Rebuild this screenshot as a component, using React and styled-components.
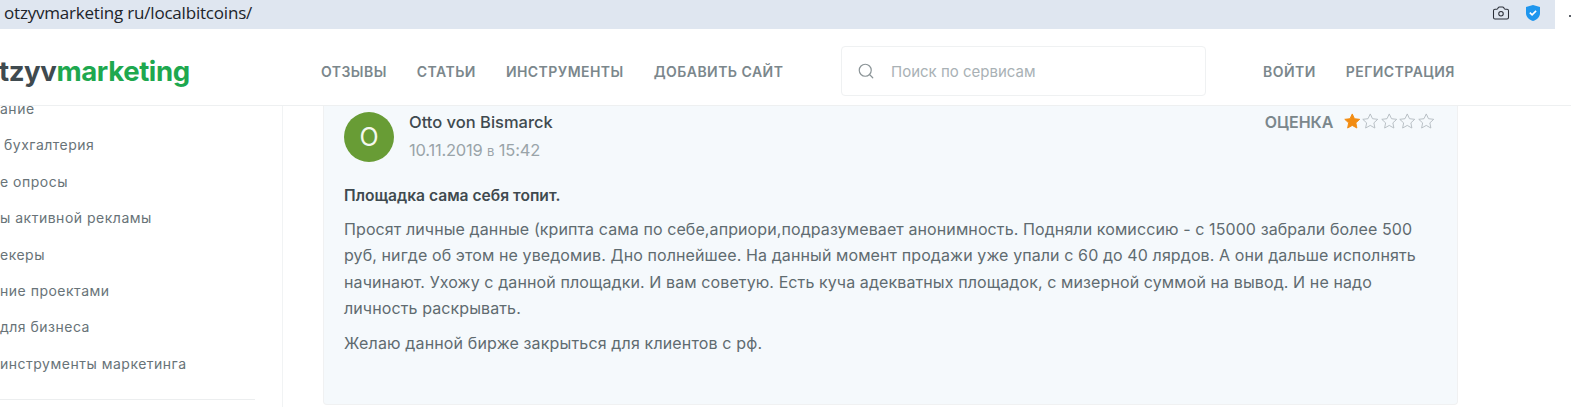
import React from 'react';
import styled, { createGlobalStyle } from 'styled-components';
import { Search, Camera } from 'lucide-react';

const GlobalStyle = createGlobalStyle`
  html, body {
    margin: 0;
    padding: 0;
    background: #fff;
    overflow: hidden;
  }
  body {
    font-family: Inter, "Noto Sans", "Liberation Sans", sans-serif;
  }
`;

const Page = styled.div`
  display: flex;
  flex-flow: column;
  width: 1571px;
  height: 407px;
  overflow: hidden;
`;

const BrowserBar = styled.div`
  display: flex;
  flex: none;
  align-items: center;
  height: 29px;
  background: linear-gradient(to right, #dfe6f0 1555px, #fff 1555px);
`;

const Url = styled.div`
  flex: 1;
  padding-left: 4px;
  padding-bottom: 5px;
  font-family: "Open Sans", sans-serif;
  font-size: 17px;
  letter-spacing: -0.2px;
  color: #20242a;
`;

const BarIcons = styled.div`
  display: flex;
  align-items: center;
  gap: 15px;
  padding-bottom: 4px;
`;

const BarDot = styled.div`
  width: 2px;
  height: 2px;
  margin-left: 13px;
  margin-top: 6px;
  background: #5a6068;
`;

const Header = styled.header`
  display: flex;
  flex: none;
  align-items: center;
  box-sizing: border-box;
  height: 77px;
  padding-top: 8px;
  border-bottom: 1px solid #eef0f1;
`;

const Logo = styled.div`
  flex: none;
  width: 322px;
  margin-left: -1px;
  font-size: 27.6px;
  font-weight: 700;
  letter-spacing: -0.4px;
  color: #3f4a4f;

  span {
    color: #1ea84f;
  }
`;

const Nav = styled.nav`
  display: flex;
  flex: none;
  gap: 30px;
  width: 520px;
`;

const NavLink = styled.a`
  font-size: 14px;
  font-weight: 600;
  letter-spacing: 0.45px;
  text-transform: uppercase;
  white-space: nowrap;
  color: #7b878c;
`;

const SearchBox = styled.div`
  display: flex;
  flex: none;
  align-items: center;
  gap: 16px;
  box-sizing: border-box;
  width: 365px;
  height: 50px;
  margin-right: 57px;
  padding-left: 15px;
  border: 1px solid #eff1f2;
  border-radius: 4px;
  font-size: 15px;
  color: #a9b1b5;
`;

const Body = styled.main`
  display: flex;
  flex: 1;
  min-height: 0;
`;

const Sidebar = styled.aside`
  flex: none;
  box-sizing: border-box;
  width: 283px;
  padding-right: 27px;
  border-right: 1px solid #f1f3f4;
`;

const Category = styled.div`
  display: flex;
  flex-flow: column;
  gap: 18px;
  margin-top: -6px;
  padding-bottom: 26px;
  border-bottom: 1px solid #eceeef;
`;

const CategoryItem = styled.a`
  margin-left: ${p => p.$shift}px;
  font-size: 14px;
  line-height: 18.4px;
  letter-spacing: 0.5px;
  white-space: nowrap;
  color: #687378;
`;

const Content = styled.div`
  flex: none;
  width: 1135px;
  margin-left: 40px;
`;

const ReviewCard = styled.article`
  box-sizing: border-box;
  height: 299px;
  padding: 6px 22px 0 20px;
  border: 1px solid #f0f1f2;
  border-top: 0;
  border-radius: 0 0 4px 4px;
  background: #f5f9fc;
`;

const ReviewHead = styled.div`
  display: flex;
  align-items: flex-start;
`;

const Avatar = styled.div`
  display: flex;
  flex: none;
  align-items: center;
  justify-content: center;
  width: 50px;
  height: 50px;
  margin-right: 15px;
  border-radius: 50%;
  background: #689c35;
  font-size: 25px;
  color: #f4f8ee;
`;

const Author = styled.div`
  flex: 1;
`;

const AuthorName = styled.div`
  font-size: 16.5px;
  font-weight: 500;
  line-height: 20px;
  color: #3f4a4f;
`;

const ReviewDate = styled.div`
  margin-top: 8px;
  font-size: 16.5px;
  line-height: 20px;
  letter-spacing: -0.2px;
  color: #9aa4a9;

  small {
    font-size: 13px;
    letter-spacing: 0;
  }
`;

const Rating = styled.div`
  display: flex;
  align-items: center;
  gap: 9px;
  height: 19px;
  font-size: 16px;
  font-weight: 600;
  color: #7b878c;
`;

const Stars = styled.div`
  display: flex;
`;

const ReviewTitle = styled.h3`
  margin: 22px 0 0;
  font-size: 15.6px;
  font-weight: 600;
  line-height: 24px;
  color: #3f4a4f;
`;

const ReviewText = styled.p`
  margin: ${p => p.$top}px 0 0;
  font-size: 16px;
  line-height: 26.4px;
  letter-spacing: ${p => p.$spacing}px;
  color: #5f6b70;
`;

const categories = [
  ['ание', 0],
  ['бухгалтерия', 4],
  ['е опросы', 0],
  ['ы активной рекламы', 0],
  ['екеры', 0],
  ['ние проектами', 0],
  ['для бизнеса', 0],
  ['инструменты маркетинга', 0],
];

const Star = ({ filled }) => (
  <svg width="18.5" height="18.5" viewBox="0 0 24 24">
    <path
      d="M12 2.5l2.9 6.2 6.8.8-5 4.6 1.3 6.7-6-3.4-6 3.4 1.3-6.7-5-4.6 6.8-.8z"
      fill={filled ? '#f28c12' : 'none'}
      stroke={filled ? '#f28c12' : '#b4bcc1'}
      strokeWidth="1.2"
    />
  </svg>
);

const App = () => {
  return (
    <Page>
      <GlobalStyle />
      <BrowserBar>
        <Url>otzyvmarketing ru/localbitcoins/</Url>
        <BarIcons>
          <Camera size={18} color="#2b2f38" strokeWidth={1.4} />
          <svg width="16" height="18" viewBox="0 0 16 18">
            <path d="M8 1l7 2v6c0 4-3 6.8-7 8-4-1.2-7-4-7-8V3z" fill="#1e96ee" />
            <path d="M4.8 8.6l2.3 2.3 4-4" fill="none" stroke="#fff" strokeWidth="1.6" />
          </svg>
          <BarDot />
        </BarIcons>
      </BrowserBar>
      <Header>
        <Logo>tzyv<span>marketing</span></Logo>
        <Nav>
          <NavLink>Отзывы</NavLink>
          <NavLink>Статьи</NavLink>
          <NavLink>Инструменты</NavLink>
          <NavLink>Добавить сайт</NavLink>
        </Nav>
        <SearchBox>
          <Search size={18} color="#8b9497" strokeWidth={1.6} />
          Поиск по сервисам
        </SearchBox>
        <Nav>
          <NavLink>Войти</NavLink>
          <NavLink>Регистрация</NavLink>
        </Nav>
      </Header>
      <Body>
        <Sidebar>
          <Category>
            {categories.map(([name, shift]) => (
              <CategoryItem key={name} $shift={shift}>{name}</CategoryItem>
            ))}
          </Category>
        </Sidebar>
        <Content>
          <ReviewCard>
            <ReviewHead>
              <Avatar>O</Avatar>
              <Author>
                <AuthorName>Otto von Bismarck</AuthorName>
                <ReviewDate>10.11.2019 <small>в</small> 15:42</ReviewDate>
              </Author>
              <Rating>
                ОЦЕНКА
                <Stars>
                  {[1, 2, 3, 4, 5].map(n => <Star key={n} filled={n === 1} />)}
                </Stars>
              </Rating>
            </ReviewHead>
            <ReviewTitle>Площадка сама себя топит.</ReviewTitle>
            <ReviewText $top={8} $spacing={0.1}>
              Просят личные данные (крипта сама по себе,априори,подразумевает анонимность. Подняли комиссию - с 15000 забрали более 500 руб, нигде об этом не уведомив. Дно полнейшее. На данный момент продажи уже упали с 60 до 40 лярдов. А они дальше исполнять начинают. Ухожу с данной площадки. И вам советую. Есть куча адекватных площадок, с мизерной суммой на вывод. И не надо личность раскрывать.
            </ReviewText>
            <ReviewText $top={8} $spacing={0.15}>Желаю данной бирже закрыться для клиентов с рф.</ReviewText>
          </ReviewCard>
        </Content>
      </Body>
    </Page>
  );
};

export default App;
